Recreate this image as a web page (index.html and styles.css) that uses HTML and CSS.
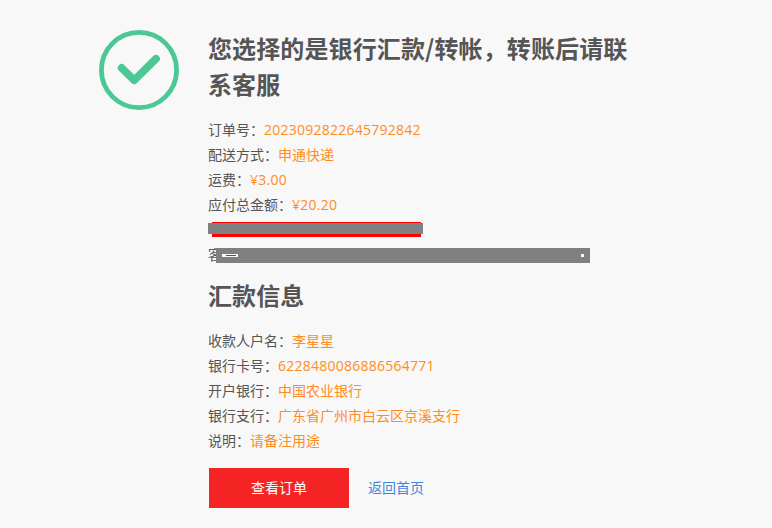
FILE: index.html
```
<!DOCTYPE html>
<html lang="zh-CN">
<head>
    <meta charset="UTF-8">
    <meta name="viewport" content="width=device-width, initial-scale=1.0">
    <title>银行汇款/转帐</title>
    <link rel="stylesheet" href="styles.css">
</head>
<body>
    <div class="pay-result">
        <svg class="icon-success" viewBox="0 0 80 80" width="80" height="80">
            <circle cx="40" cy="40" r="37.6" />
            <path d="M22.7 38 L35.2 50.3 L57 28.8" />
        </svg>

        <div class="content">
            <h2>您选择的是银行汇款/转帐，转账后请联系客服</h2>
            <ul class="info">
                <li>订单号：<span class="num">2023092822645792842</span></li>
                <li>配送方式：<span>申通快递</span></li>
                <li>运费：<span class="num">¥3.00</span></li>
                <li>应付总金额：<span class="num">¥20.20</span></li>
                <li class="masked"><i class="notice"></i><i class="mask mask-notice"></i></li>
                <li class="masked">客<i class="mask mask-service"><b class="dash"></b><b class="dash-mid"></b><b class="dot"></b></i></li>
            </ul>

            <h2>汇款信息</h2>
            <ul class="info">
                <li>收款人户名：<span>李星星</span></li>
                <li>银行卡号：<span class="num">6228480086886564771</span></li>
                <li>开户银行：<span>中国农业银行</span></li>
                <li>银行支行：<span>广东省广州市白云区京溪支行</span></li>
                <li>说明：<span>请备注用途</span></li>
            </ul>

            <div class="actions">
                <a class="btn-order" href="#">查看订单</a>
                <a class="link-home" href="#">返回首页</a>
            </div>
        </div>
    </div>
</body>
</html>
```

FILE: styles.css
```
body {
    margin: 0;
    background: #f8f8f8;
    color: #555;
    font-family: "Noto Sans CJK SC", sans-serif;
    font-size: 14px;
}

.pay-result {
    display: flex;
    align-items: flex-start;
    height: 528px;
    padding-left: 99px;
    overflow: hidden;
    box-sizing: border-box;
}

/* Success icon */
.icon-success {
    flex: none;
    margin: 30px 29px 0 0;
    fill: none;
    stroke: #4cc796;
    stroke-linecap: round;
    stroke-linejoin: round;
}

.icon-success circle {
    stroke-width: 4.8;
}

.icon-success path {
    stroke-width: 7.8;
}

.content {
    width: 430px;
    padding-top: 30px;
}

h2 {
    margin: 0;
    font-size: 24px;
    line-height: 36px;
    font-weight: bold;
    letter-spacing: 0.12px;
}

/* Order and bank details */
.info {
    list-style: none;
    margin: 15px 0 10px;
    padding: 0;
}

.info li {
    height: 25px;
    line-height: 25px;
    white-space: nowrap;
}

.info span {
    color: #ff8c22;
}

.info .num {
    font-family: "Open Sans", "Noto Sans", sans-serif;
    letter-spacing: 0.24px;
}

/* Hidden contact details */
.info .masked {
    position: relative;
}

.notice,
.mask,
.mask b {
    position: absolute;
}

.notice {
    left: 4px;
    top: 5px;
    width: 209px;
    height: 15px;
    background: #f00;
}

.mask {
    background: #808080;
}

.mask-notice {
    left: 0;
    top: 6px;
    width: 215px;
    height: 11px;
}

.mask-service {
    left: 8px;
    top: 6px;
    width: 374px;
    height: 15px;
}

.mask b {
    background: #f8f8f8;
}

.dash {
    left: 6px;
    top: 6px;
    width: 16px;
    height: 3px;
}

.mask .dash-mid {
    left: 10px;
    top: 7px;
    width: 10px;
    height: 1px;
    background: #555;
}

.dot {
    left: 365px;
    top: 6px;
    width: 3px;
    height: 3px;
}

/* Buttons */
.actions {
    display: flex;
    align-items: center;
    gap: 19px;
    margin-top: 15px;
    padding-left: 1px;
}

.actions a {
    text-decoration: none;
}

.btn-order {
    width: 140px;
    height: 40px;
    line-height: 39px;
    background: #f52424;
    color: #fff;
    text-align: center;
}

.link-home {
    line-height: 39px;
    height: 40px;
    color: #3f87dc;
}
```
